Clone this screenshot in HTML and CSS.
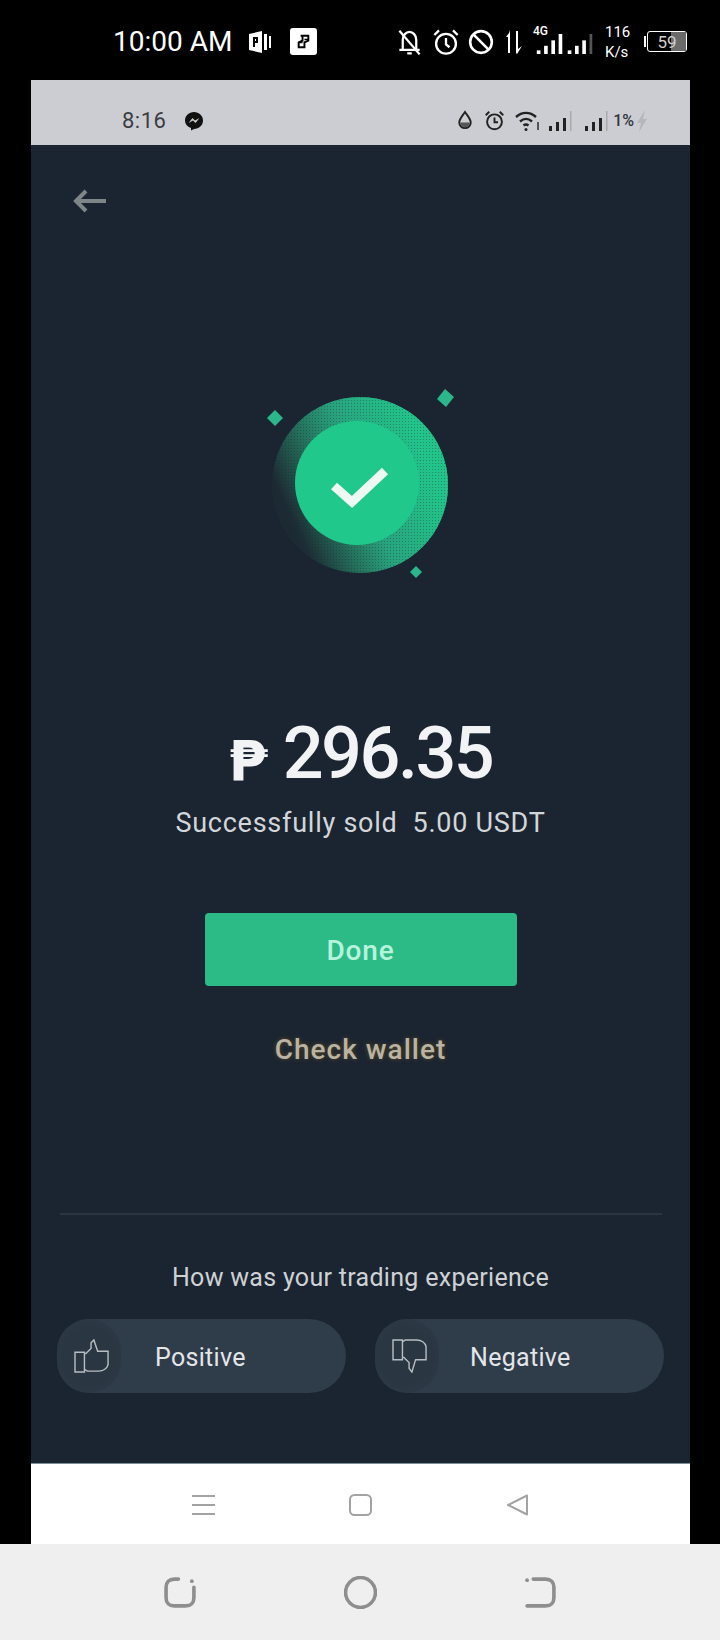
FILE: index.html
```html
<!DOCTYPE html>
<html lang="en">
<head>
  <meta charset="UTF-8">
  <title>Sell result</title>
  <link rel="stylesheet" href="styles.css">
</head>
<body>
  <!-- real phone status bar -->
  <header class="status-outer">
    <span class="clock-outer">10:00 AM</span>
    <svg class="ic-p" viewBox="0 0 24 24"><path fill="#fff" d="M1 4l13-3v22l-13-3z"/><path fill="#000" d="M5 7h5v6H7v4H5zM7 9v2h1V9z"/><path fill="#fff" d="M16 4h3v16h-3zM21 6h2v12h-2z"/></svg>
    <svg class="ic-s" viewBox="0 0 28 28"><rect x="0" y="0" width="28" height="28" rx="3" fill="#fff"/><path fill="none" stroke="#000" stroke-width="2" d="M11 8h8v5l-4 2v5H9v-5l4-2V8"/><path stroke="#000" stroke-width="1.5" d="M9 15h4M15 12h4"/></svg>
    <div class="status-right">
      <svg class="ic20" viewBox="0 0 24 24" fill="none" stroke="#fff" stroke-width="2"><path d="M6 19V10c0-4 3-7 6-7s6 3 6 7v9M3 19h18M10 22h4"/><path d="M3 2l18 21"/></svg>
      <svg class="ic-alarm" viewBox="0 0 24 24" fill="none" stroke="#fff" stroke-width="2"><circle cx="12" cy="13.500" r="8.500"/><path d="M12 8.500v5.500l3 2.500M2 6l4-4M22 6l-4-4"/></svg>
      <svg class="ic-block" viewBox="0 0 24 24" fill="none" stroke="#fff" stroke-width="2.400"><circle cx="12" cy="12" r="10"/><path d="M5 5l14 14"/></svg>
      <svg class="ic-arrows" viewBox="0 0 16 26"><path fill="#fff" d="M3 4L0 8h2v16h2V1zM10 2h2v18l4-3-5 8-1-1z"/></svg>
      <div class="net">
        <span class="net-4g">4G</span>
        <svg class="net-bars" viewBox="0 0 62 22" fill="#fff"><rect x="0" y="18" width="4" height="4"/><rect x="8" y="13" width="4" height="9"/><rect x="16" y="7" width="4" height="15"/><rect x="24" y="0" width="4" height="22"/><rect x="34" y="18" width="4" height="4"/><rect x="42" y="13" width="4" height="9"/><rect x="50" y="7" width="4" height="15"/><rect x="58" y="0" width="3" height="22" fill="#555"/></svg>
      </div>
      <div class="speed"><span>116</span><span>K/s</span></div>
      <div class="battery-wrap">
        <span class="battery-nub"></span>
        <div class="battery"><span class="battery-fill"></span><span class="battery-num">59</span></div>
      </div>
    </div>
  </header>

  <div class="screen">
    <!-- status bar inside the recording -->
    <div class="status-inner">
      <span class="clock-inner">8:16</span>
      <svg class="ic-msg" viewBox="0 0 20 20"><path fill="#111" d="M10 1c5 0 9 3.600 9 8.500S15 18 10 18l-3 1.500V17C3 15.500 1 13 1 9.500 1 4.600 5 1 10 1z"/><path fill="#ccc" d="M4.500 12l4-5 2.500 2.500L15.500 7l-4 5-2.500-2.500z"/></svg>
      <div class="inner-right">
        <svg class="ic-drop" viewBox="0 0 16 22"><path fill="none" stroke="#222" stroke-width="2" d="M8 2c3 4.500 6 7.500 6 11a6 6 0 0 1-12 0C2 9.500 5 6.500 8 2z"/><path fill="#555" d="M3 13h10a5 5 0 0 1-10 0z"/></svg>
        <svg class="ic-alarm-s" viewBox="0 0 24 24" fill="none" stroke="#222" stroke-width="2.200"><circle cx="12" cy="13.500" r="8.500"/><path d="M12 8.500v5.500h4M2 6l4-4M22 6l-4-4"/></svg>
        <svg class="ic-wifi" viewBox="0 0 26 22" fill="none" stroke="#222" stroke-width="2.400"><path d="M1 7c6-5.500 14-5.500 20 0M5 11.500c4-3.500 8-3.500 12 0M8.500 15.500c2-1.500 3-1.500 5 0"/><circle cx="11" cy="19.500" r="1.500" fill="#222" stroke="none"/><path stroke-width="1.400" d="M23 12v8"/></svg>
        <svg class="ic-sig" viewBox="0 0 24 20"><path fill="#222" d="M0 15h3v5H0zM7 11h3v9H7zM14 7h3v13h-3z"/><path fill="#aaa" d="M21 0h1.500v20H21z"/></svg>
        <svg class="ic-sig sig-2" viewBox="0 0 24 20"><path fill="#222" d="M0 15h3v5H0zM7 11h3v9H7zM14 7h3v13h-3z"/><path fill="#aaa" d="M21 0h1.500v20H21z"/></svg>
        <span class="pct">1%</span>
        <svg class="ic-bolt" viewBox="0 0 12 22"><path fill="#b5b7bb" d="M9 0L1 13h4l-2 9 8-13H7z"/></svg>
      </div>
    </div>

    <main class="panel">
      <svg class="back" viewBox="0 0 34 26" fill="none" stroke="#7f8689" stroke-width="4"><path d="M34 13H4M14 3L4 13l10 10"/></svg>

      <svg class="hero" viewBox="0 0 240 220">
        <defs>
          <linearGradient id="ring" x1="0.85" y1="0.15" x2="0.05" y2="0.55">
            <stop offset="0" stop-color="#2fb289"/>
            <stop offset="0.55" stop-color="#277e63"/>
            <stop offset="1" stop-color="#1c2a33"/>
          </linearGradient>
          <linearGradient id="ring2" x1="0.95" y1="0.55" x2="0.15" y2="0.85">
            <stop offset="0" stop-color="#22c48a" stop-opacity="1"/>
            <stop offset="0.45" stop-color="#28a57e" stop-opacity="0.95"/>
            <stop offset="1" stop-color="#25614f" stop-opacity="0"/>
          </linearGradient>
          <pattern id="dots" width="3" height="3" patternUnits="userSpaceOnUse">
            <rect width="1" height="1" fill="#1b2531" fill-opacity="0.35"/>
          </pattern>
        </defs>
        <circle cx="120" cy="115" r="88" fill="url(#ring)"/>
        <circle cx="120" cy="115" r="88" fill="url(#ring2)"/>
        <circle cx="120" cy="115" r="88" fill="url(#dots)"/>
        <circle cx="117" cy="113" r="62" fill="#20c98b"/>
        <path d="M94 116l18 16 33-31" fill="none" stroke="#eef9f4" stroke-width="9"/>
        <path d="M35 40l8 8-8 8-8-8z" fill="#2cb78a"/>
        <path d="M205 19l9 8-8 10-9-8z" fill="#2cb78a"/>
        <path d="M176 196l6 6-6 6-6-6z" fill="#2cb78a"/>
      </svg>

      <div class="amount"><span class="peso">₱</span><span class="value">296.35</span></div>
      <p class="sold">Successfully sold&nbsp; 5.00 USDT</p>
      <button class="done">Done</button>
      <a class="wallet">Check wallet</a>

      <hr class="divider">
      <p class="ask">How was your trading experience</p>
      <div class="votes">
        <div class="pill">
          <span class="pill-ic">
            <svg viewBox="0 0 38 36" fill="none" stroke="#b8bdc2" stroke-width="1.500"><path d="M1 14h10v21H1zM11 32l3 2h12c5 0 9-3 10-7V13H25l-1-3-3-9-3 3v6l-6 6"/></svg>
          </span>
          <span class="pill-text">Positive</span>
        </div>
        <div class="pill">
          <span class="pill-ic">
            <svg viewBox="0 0 38 36" fill="none" stroke="#b8bdc2" stroke-width="1.500"><path d="M1 1h10v21H1zM11 3l3-2h12c5 0 9 3 10 7v14H25l-1 3-3 10-3-4v-6l-6-6"/></svg>
          </span>
          <span class="pill-text pill-text-neg">Negative</span>
        </div>
      </div>
    </main>

    <nav class="nav-inner">
      <span class="slot">
        <svg class="nav-ic" viewBox="0 0 23 22" fill="none" stroke="#a3a3a3" stroke-width="2"><path d="M0 2h23M0 11h23M0 20h23"/></svg>
      </span>
      <span class="slot">
        <svg class="nav-ic" viewBox="0 0 23 22" fill="none" stroke="#a3a3a3" stroke-width="2"><rect x="1" y="1" width="21" height="20" rx="4.500"/></svg>
      </span>
      <span class="slot">
        <svg class="nav-ic" viewBox="0 0 23 22" fill="none" stroke="#a3a3a3" stroke-width="2" stroke-linejoin="round"><path d="M21 1.500v19L2 11z"/></svg>
      </span>
    </nav>
  </div>

  <nav class="nav-outer">
    <span class="slot-o">
      <svg class="nav-o" viewBox="0 0 32 32" fill="none" stroke="#8e8e8e" stroke-width="3.500" stroke-linecap="round"><path d="M14 3h-4C5 3 2 6 2 11v10c0 5 3 8 8 8h11c5 0 8-3 8-8V11"/><circle cx="27" cy="5" r="1.800" fill="#8e8e8e" stroke="none"/></svg>
    </span>
    <span class="slot-o">
      <svg class="nav-o" viewBox="0 0 32 32" fill="none" stroke="#8e8e8e" stroke-width="3.500"><circle cx="16" cy="16" r="14.500"/></svg>
    </span>
    <span class="slot-o">
      <svg class="nav-o" viewBox="0 0 32 32" fill="none" stroke="#8e8e8e" stroke-width="3.500" stroke-linecap="round"><path d="M9 3h12c5 0 8 3 8 8v10c0 5-3 8-8 8H3"/><circle cx="3" cy="4" r="1.800" fill="#8e8e8e" stroke="none"/></svg>
    </span>
  </nav>
</body>
</html>
```

FILE: styles.css
```css
* {
  box-sizing: border-box;
  font-family: Roboto, "Liberation Sans", sans-serif;
}
html, body {
  margin: 0;
  width: 720px;
  height: 1640px;
  background: #000;
  overflow: hidden;
}
p {
  margin: 0;
}

/* outer status bar */
.status-outer {
  height: 80px;
  display: flex;
  align-items: center;
  padding: 3px 33px 0 113px;
  color: #fff;
}
.clock-outer {
  font-size: 28px;
  width: 135px;
  white-space: nowrap;
}
.ic-p {
  width: 24px;
  height: 24px;
  margin-right: 18px;
}
.ic-s {
  width: 27px;
  height: 27px;
}
.status-right {
  margin-left: auto;
  display: flex;
  align-items: center;
}
.ic20 {
  width: 27px;
  height: 28px;
  margin-right: 9px;
}
.ic-alarm {
  width: 28px;
  height: 28px;
  margin-right: 8px;
}
.ic-block {
  width: 26px;
  height: 26px;
  margin-right: 12px;
}
.ic-arrows {
  width: 16px;
  height: 28px;
  margin-right: 11px;
}
.net {
  width: 66px;
  height: 30px;
  margin-right: 6px;
  position: relative;
}
.net-4g {
  position: absolute;
  left: 0;
  top: -3px;
  font-size: 12px;
  font-weight: 500;
}
.net-bars {
  position: absolute;
  left: 1px;
  bottom: 3px;
  width: 62px;
  height: 20px;
}
.speed {
  display: flex;
  flex-direction: column;
  font-size: 15px;
  line-height: 20px;
  text-align: left;
  margin-right: 12px;
  width: 27px;
}
.battery-wrap {
  display: flex;
  align-items: center;
}
.battery-nub {
  width: 2px;
  height: 11px;
  background: #fff;
  margin-right: 1px;
}
.battery {
  width: 40px;
  height: 21px;
  border: 1.500px solid #fff;
  border-radius: 3px;
  position: relative;
  display: flex;
  align-items: center;
  justify-content: center;
}
.battery-fill {
  position: absolute;
  right: 0;
  top: 0;
  bottom: 0;
  width: 15px;
  background: #6a6a6a;
}
.battery-num {
  position: relative;
  font-size: 17px;
  color: #cfcfcf;
}

/* the recording */
.screen {
  width: 659px;
  margin-left: 31px;
}
.status-inner {
  height: 65px;
  background: #cbcdd3;
  display: flex;
  align-items: center;
  padding: 16px 42px 0 91px;
}
.clock-inner {
  font-size: 22px;
  color: #3a3d42;
  width: 62px;
  letter-spacing: 0.5px;
}
.ic-msg {
  width: 20px;
  height: 20px;
}
.inner-right {
  margin-left: auto;
  display: flex;
  align-items: center;
}
.ic-drop {
  width: 16px;
  height: 21px;
  margin-right: 11px;
}
.ic-alarm-s {
  width: 21px;
  height: 21px;
  margin-right: 10px;
}
.ic-wifi {
  width: 26px;
  height: 22px;
  margin-right: 8px;
}
.ic-sig {
  width: 24px;
  height: 20px;
  margin-right: 12px;
}
.sig-2 {
  margin-right: 4px;
}
.pct {
  font-size: 16px;
  font-weight: 500;
  color: #33363a;
  margin-right: 2px;
}
.ic-bolt {
  width: 12px;
  height: 22px;
}

.panel {
  height: 1318px;
  background: #1b2531;
  display: flex;
  flex-direction: column;
  align-items: center;
  padding-top: 43px;
}
.back {
  align-self: flex-start;
  margin-left: 41px;
  width: 34px;
  height: 26px;
}
.hero {
  width: 240px;
  height: 220px;
  margin-top: 156px;
  margin-left: -1px;
}
.amount {
  margin-top: 129px;
  height: 70px;
  display: flex;
  align-items: center;
  justify-content: center;
  color: #f1f3f4;
}
.peso {
  font-family: "DejaVu Sans", sans-serif;
  font-weight: 700;
  font-size: 56px;
  margin-top: 12px;
  margin-right: 15px;
}
.value {
  font-size: 72px;
  line-height: 70px;
  letter-spacing: -2.500px;
  font-weight: 500;
}
.sold {
  margin-top: 17px;
  font-size: 27px;
  line-height: 34px;
  color: #d3d6d9;
  letter-spacing: 0.75px;
  white-space: nowrap;
}
.done {
  width: 312px;
  height: 73px;
  margin-top: 73px;
  padding-top: 3px;
  border: none;
  border-radius: 4px;
  background: #2cbb87;
  color: #b6f3dc;
  font-size: 28px;
  font-weight: 500;
  letter-spacing: 0.8px;
}
.wallet {
  margin-top: 47px;
  line-height: 34px;
  font-size: 28px;
  font-weight: 500;
  color: #b9b3a3;
  letter-spacing: 1px;
  text-shadow: 0 0 4px #5e4a22;
}
.divider {
  width: 602px;
  height: 2px;
  margin: 146px 0 0 0;
  border: none;
  background: #2a3540;
}
.ask {
  margin-top: 47px;
  line-height: 32px;
  font-size: 25px;
  color: #ced2d5;
  letter-spacing: 0.3px;
  white-space: nowrap;
}
.votes {
  margin-top: 25px;
  width: 607px;
  display: flex;
  justify-content: space-between;
}
.pill {
  width: 289px;
  height: 74px;
  border-radius: 37px;
  background: #2f3c4a;
  display: flex;
  align-items: center;
}
.pill-ic {
  width: 64px;
  height: 74px;
  border-radius: 37px;
  background: radial-gradient(circle at 32px 37px, #2a3642 55%, #2f3c4a 100%);
  display: flex;
  align-items: center;
  justify-content: center;
  padding-left: 6px;
}
.pill-ic svg {
  width: 36px;
  height: 34px;
}
.pill-text {
  margin-left: 34px;
  margin-top: 3px;
  font-size: 25px;
  letter-spacing: 0.3px;
  color: #e3e6e8;
}
.pill-text-neg {
  margin-left: 31px;
}

/* nav bars */
.nav-inner {
  height: 81px;
  padding-top: 2px;
  background: #fff;
  border-top: 1px solid #7d9097;
  display: flex;
  align-items: center;
  justify-content: center;
}
.slot {
  width: 157px;
  display: flex;
  justify-content: center;
}
.nav-ic {
  width: 23px;
  height: 22px;
}
.nav-outer {
  height: 96px;
  background: #efefef;
  display: flex;
  align-items: center;
  justify-content: center;
}
.slot-o {
  width: 180px;
  display: flex;
  justify-content: center;
}
.nav-o {
  width: 33px;
  height: 33px;
}
```
